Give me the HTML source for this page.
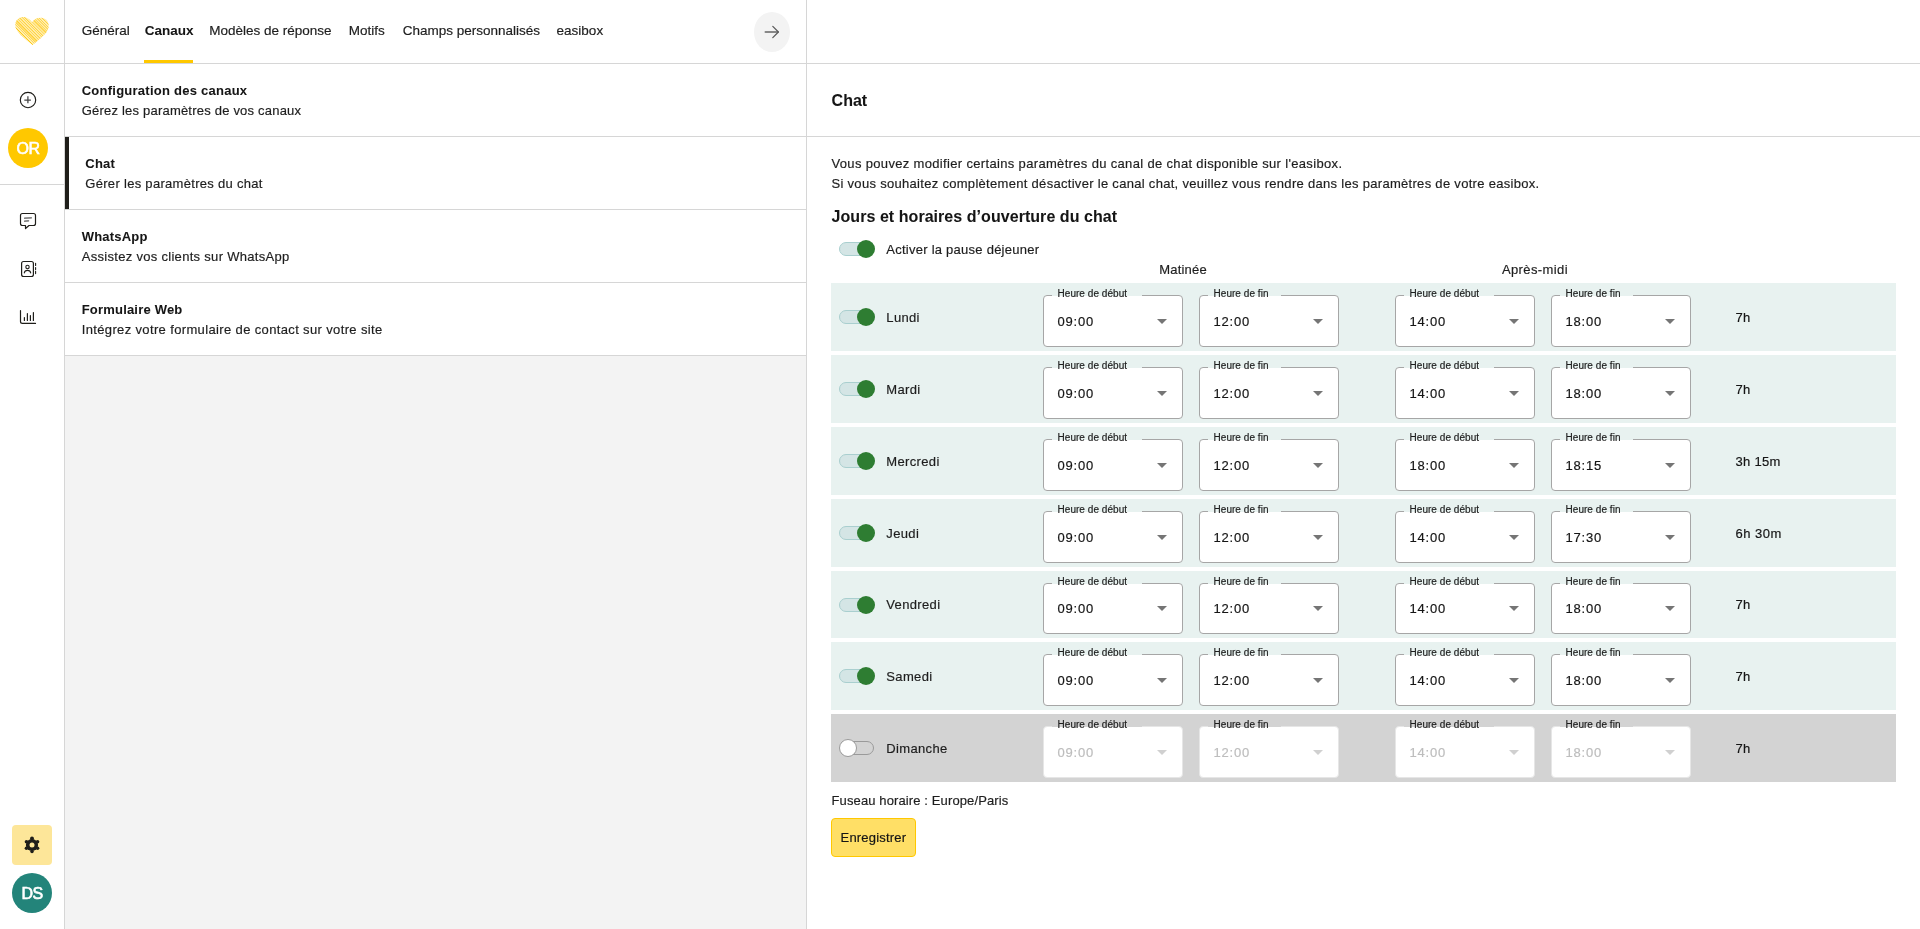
<!DOCTYPE html>
<html lang="fr"><head><meta charset="utf-8"><title>Canaux - Chat</title>
<style>
html,body{margin:0;padding:0;width:1920px;height:929px;overflow:hidden;background:#fff;font-family:"Liberation Sans", sans-serif;}
.t{position:absolute;white-space:nowrap;}
body>div.wrap{position:absolute;left:0;top:0;width:1920px;height:929px;will-change:transform;}
.r{position:absolute;}
</style></head><body><div class="wrap">
<div class="r" style="left:65px;top:356px;width:741px;height:573px;background:#f3f3f3"></div>
<div class="r" style="left:0px;top:63px;width:1920px;height:1px;background:#d6d6d6"></div>
<div class="r" style="left:64px;top:0px;width:1px;height:929px;background:#d6d6d6"></div>
<div class="r" style="left:0px;top:184px;width:64px;height:1px;background:#d6d6d6"></div>
<div class="r" style="left:806px;top:0px;width:1px;height:929px;background:#d6d6d6"></div>
<div class="r" style="left:65px;top:136px;width:1855px;height:1px;background:#d6d6d6"></div>
<div class="r" style="left:65px;top:209px;width:741px;height:1px;background:#d6d6d6"></div>
<div class="r" style="left:65px;top:282px;width:741px;height:1px;background:#d6d6d6"></div>
<div class="r" style="left:65px;top:355px;width:741px;height:1px;background:#d6d6d6"></div>
<div class="r" style="left:65px;top:137px;width:4px;height:72px;background:#1f1e1a"></div>
<div class="t" style="left:81.70px;top:23.77px;font-size:13.5px;line-height:13.5px;font-weight:400;color:#1e1e1e;letter-spacing:0px;-webkit-text-stroke:0.18px #1e1e1e;">Général</div>
<div class="t" style="left:144.75px;top:23.77px;font-size:13.5px;line-height:13.5px;font-weight:700;color:#151515;letter-spacing:0px;-webkit-text-stroke:0.05px #151515;">Canaux</div>
<div class="t" style="left:209.20px;top:23.77px;font-size:13.5px;line-height:13.5px;font-weight:400;color:#1e1e1e;letter-spacing:0px;-webkit-text-stroke:0.18px #1e1e1e;">Modèles de réponse</div>
<div class="t" style="left:348.80px;top:23.77px;font-size:13.5px;line-height:13.5px;font-weight:400;color:#1e1e1e;letter-spacing:0px;-webkit-text-stroke:0.18px #1e1e1e;">Motifs</div>
<div class="t" style="left:402.80px;top:23.77px;font-size:13.5px;line-height:13.5px;font-weight:400;color:#1e1e1e;letter-spacing:0px;-webkit-text-stroke:0.18px #1e1e1e;">Champs personnalisés</div>
<div class="t" style="left:556.60px;top:23.77px;font-size:13.5px;line-height:13.5px;font-weight:400;color:#1e1e1e;letter-spacing:0px;-webkit-text-stroke:0.18px #1e1e1e;">easibox</div>
<div class="r" style="left:144px;top:60px;width:49px;height:3px;background:#ffc800"></div>
<div class="r" style="left:754px;top:12px;width:36px;height:40px;background:#f3f3f3;border-radius:50%"></div>
<div class="t" style="left:81.70px;top:84.30px;font-size:13px;line-height:13px;font-weight:700;color:#151515;letter-spacing:0.25px;-webkit-text-stroke:0.05px #151515;">Configuration des canaux</div>
<div class="t" style="left:81.70px;top:103.80px;font-size:13px;line-height:13px;font-weight:400;color:#1e1e1e;letter-spacing:0.21px;-webkit-text-stroke:0.18px #1e1e1e;">Gérez les paramètres de vos canaux</div>
<div class="t" style="left:85.30px;top:157.30px;font-size:13px;line-height:13px;font-weight:700;color:#151515;letter-spacing:0.2px;-webkit-text-stroke:0.05px #151515;">Chat</div>
<div class="t" style="left:85.30px;top:176.80px;font-size:13px;line-height:13px;font-weight:400;color:#1e1e1e;letter-spacing:0.3px;-webkit-text-stroke:0.18px #1e1e1e;">Gérer les paramètres du chat</div>
<div class="t" style="left:81.70px;top:230.30px;font-size:13px;line-height:13px;font-weight:700;color:#151515;letter-spacing:0.2px;-webkit-text-stroke:0.05px #151515;">WhatsApp</div>
<div class="t" style="left:81.70px;top:249.80px;font-size:13px;line-height:13px;font-weight:400;color:#1e1e1e;letter-spacing:0.3px;-webkit-text-stroke:0.18px #1e1e1e;">Assistez vos clients sur WhatsApp</div>
<div class="t" style="left:81.70px;top:303.30px;font-size:13px;line-height:13px;font-weight:700;color:#151515;letter-spacing:0.2px;-webkit-text-stroke:0.05px #151515;">Formulaire Web</div>
<div class="t" style="left:81.70px;top:322.80px;font-size:13px;line-height:13px;font-weight:400;color:#1e1e1e;letter-spacing:0.36px;-webkit-text-stroke:0.18px #1e1e1e;">Intégrez votre formulaire de contact sur votre site</div>
<div class="t" style="left:831.60px;top:93.06px;font-size:16px;line-height:16px;font-weight:700;color:#151515;letter-spacing:0px;-webkit-text-stroke:0.05px #151515;">Chat</div>
<div class="t" style="left:831.50px;top:157.00px;font-size:13px;line-height:13px;font-weight:400;color:#1e1e1e;letter-spacing:0.335px;-webkit-text-stroke:0.18px #1e1e1e;">Vous pouvez modifier certains paramètres du canal de chat disponible sur l'easibox.</div>
<div class="t" style="left:831.50px;top:176.90px;font-size:13px;line-height:13px;font-weight:400;color:#1e1e1e;letter-spacing:0.3px;-webkit-text-stroke:0.18px #1e1e1e;">Si vous souhaitez complètement désactiver le canal chat, veuillez vous rendre dans les paramètres de votre easibox.</div>
<div class="t" style="left:831.60px;top:209.46px;font-size:16px;line-height:16px;font-weight:700;color:#151515;letter-spacing:0.05px;-webkit-text-stroke:0.05px #151515;">Jours et horaires d’ouverture du chat</div>
<div class="r" style="left:839px;top:242px;width:34px;height:14px;box-sizing:border-box;background:#d4e5e5;border:1px solid #a9cfcf;border-radius:7px"></div>
<div class="r" style="left:857px;top:240px;width:18px;height:18px;background:#2e7d32;border-radius:50%"></div>
<div class="t" style="left:886.30px;top:243.20px;font-size:13px;line-height:13px;font-weight:400;color:#1e1e1e;letter-spacing:0.25px;-webkit-text-stroke:0.18px #1e1e1e;">Activer la pause déjeuner</div>
<div class="t" style="left:1159.20px;top:263.00px;font-size:13px;line-height:13px;font-weight:400;color:#1e1e1e;letter-spacing:0.2px;-webkit-text-stroke:0.18px #1e1e1e;">Matinée</div>
<div class="t" style="left:1501.90px;top:263.00px;font-size:13px;line-height:13px;font-weight:400;color:#1e1e1e;letter-spacing:0.4px;-webkit-text-stroke:0.18px #1e1e1e;">Après-midi</div>
<div class="r" style="left:831px;top:283px;width:1065px;height:68px;background:#e8f2f0"></div>
<div class="r" style="left:839px;top:310.0px;width:34px;height:14px;box-sizing:border-box;background:#d4e5e5;border:1px solid #a9cfcf;border-radius:7px"></div>
<div class="r" style="left:857px;top:308.0px;width:18px;height:18px;background:#2e7d32;border-radius:50%"></div>
<div class="t" style="left:886.30px;top:310.80px;font-size:13px;line-height:13px;font-weight:400;color:#1e1e1e;letter-spacing:0.35px;-webkit-text-stroke:0.18px #1e1e1e;">Lundi</div>
<div class="r" style="left:1043px;top:295px;width:140px;height:52px;box-sizing:border-box;background:#fff;border:1px solid #a6a6a6;border-radius:4px"></div>
<div class="r" style="left:1052px;top:294px;width:90px;height:3px;background:#e8f2f0"></div>
<div class="r" style="left:1052px;top:296px;width:90px;height:2px;background:#fff"></div>
<div class="t" style="left:1057.50px;top:288.54px;font-size:10px;line-height:10px;font-weight:400;color:#1e1e1e;letter-spacing:0.05px;-webkit-text-stroke:0.18px #1e1e1e;">Heure de début</div>
<div class="t" style="left:1057.50px;top:314.80px;font-size:13px;line-height:13px;font-weight:400;color:#151515;letter-spacing:0.8px;-webkit-text-stroke:0.18px #151515;">09:00</div>
<div class="r" style="left:1157.2px;top:319px;width:0;height:0;border-left:5px solid transparent;border-right:5px solid transparent;border-top:5px solid #757575"></div>
<div class="r" style="left:1199px;top:295px;width:140px;height:52px;box-sizing:border-box;background:#fff;border:1px solid #a6a6a6;border-radius:4px"></div>
<div class="r" style="left:1208px;top:294px;width:73px;height:3px;background:#e8f2f0"></div>
<div class="r" style="left:1208px;top:296px;width:73px;height:2px;background:#fff"></div>
<div class="t" style="left:1213.50px;top:288.54px;font-size:10px;line-height:10px;font-weight:400;color:#1e1e1e;letter-spacing:0.05px;-webkit-text-stroke:0.18px #1e1e1e;">Heure de fin</div>
<div class="t" style="left:1213.50px;top:314.80px;font-size:13px;line-height:13px;font-weight:400;color:#151515;letter-spacing:0.8px;-webkit-text-stroke:0.18px #151515;">12:00</div>
<div class="r" style="left:1313.2px;top:319px;width:0;height:0;border-left:5px solid transparent;border-right:5px solid transparent;border-top:5px solid #757575"></div>
<div class="r" style="left:1395px;top:295px;width:140px;height:52px;box-sizing:border-box;background:#fff;border:1px solid #a6a6a6;border-radius:4px"></div>
<div class="r" style="left:1404px;top:294px;width:90px;height:3px;background:#e8f2f0"></div>
<div class="r" style="left:1404px;top:296px;width:90px;height:2px;background:#fff"></div>
<div class="t" style="left:1409.50px;top:288.54px;font-size:10px;line-height:10px;font-weight:400;color:#1e1e1e;letter-spacing:0.05px;-webkit-text-stroke:0.18px #1e1e1e;">Heure de début</div>
<div class="t" style="left:1409.50px;top:314.80px;font-size:13px;line-height:13px;font-weight:400;color:#151515;letter-spacing:0.8px;-webkit-text-stroke:0.18px #151515;">14:00</div>
<div class="r" style="left:1509.2px;top:319px;width:0;height:0;border-left:5px solid transparent;border-right:5px solid transparent;border-top:5px solid #757575"></div>
<div class="r" style="left:1551px;top:295px;width:140px;height:52px;box-sizing:border-box;background:#fff;border:1px solid #a6a6a6;border-radius:4px"></div>
<div class="r" style="left:1560px;top:294px;width:73px;height:3px;background:#e8f2f0"></div>
<div class="r" style="left:1560px;top:296px;width:73px;height:2px;background:#fff"></div>
<div class="t" style="left:1565.50px;top:288.54px;font-size:10px;line-height:10px;font-weight:400;color:#1e1e1e;letter-spacing:0.05px;-webkit-text-stroke:0.18px #1e1e1e;">Heure de fin</div>
<div class="t" style="left:1565.50px;top:314.80px;font-size:13px;line-height:13px;font-weight:400;color:#151515;letter-spacing:0.8px;-webkit-text-stroke:0.18px #151515;">18:00</div>
<div class="r" style="left:1665.2px;top:319px;width:0;height:0;border-left:5px solid transparent;border-right:5px solid transparent;border-top:5px solid #757575"></div>
<div class="t" style="left:1735.50px;top:310.60px;font-size:13px;line-height:13px;font-weight:400;color:#151515;letter-spacing:0.15px;-webkit-text-stroke:0.18px #151515;">7h</div>
<div class="r" style="left:831px;top:355px;width:1065px;height:68px;background:#e8f2f0"></div>
<div class="r" style="left:839px;top:382.0px;width:34px;height:14px;box-sizing:border-box;background:#d4e5e5;border:1px solid #a9cfcf;border-radius:7px"></div>
<div class="r" style="left:857px;top:380.0px;width:18px;height:18px;background:#2e7d32;border-radius:50%"></div>
<div class="t" style="left:886.30px;top:382.80px;font-size:13px;line-height:13px;font-weight:400;color:#1e1e1e;letter-spacing:0.35px;-webkit-text-stroke:0.18px #1e1e1e;">Mardi</div>
<div class="r" style="left:1043px;top:367px;width:140px;height:52px;box-sizing:border-box;background:#fff;border:1px solid #a6a6a6;border-radius:4px"></div>
<div class="r" style="left:1052px;top:366px;width:90px;height:3px;background:#e8f2f0"></div>
<div class="r" style="left:1052px;top:368px;width:90px;height:2px;background:#fff"></div>
<div class="t" style="left:1057.50px;top:360.54px;font-size:10px;line-height:10px;font-weight:400;color:#1e1e1e;letter-spacing:0.05px;-webkit-text-stroke:0.18px #1e1e1e;">Heure de début</div>
<div class="t" style="left:1057.50px;top:386.80px;font-size:13px;line-height:13px;font-weight:400;color:#151515;letter-spacing:0.8px;-webkit-text-stroke:0.18px #151515;">09:00</div>
<div class="r" style="left:1157.2px;top:391px;width:0;height:0;border-left:5px solid transparent;border-right:5px solid transparent;border-top:5px solid #757575"></div>
<div class="r" style="left:1199px;top:367px;width:140px;height:52px;box-sizing:border-box;background:#fff;border:1px solid #a6a6a6;border-radius:4px"></div>
<div class="r" style="left:1208px;top:366px;width:73px;height:3px;background:#e8f2f0"></div>
<div class="r" style="left:1208px;top:368px;width:73px;height:2px;background:#fff"></div>
<div class="t" style="left:1213.50px;top:360.54px;font-size:10px;line-height:10px;font-weight:400;color:#1e1e1e;letter-spacing:0.05px;-webkit-text-stroke:0.18px #1e1e1e;">Heure de fin</div>
<div class="t" style="left:1213.50px;top:386.80px;font-size:13px;line-height:13px;font-weight:400;color:#151515;letter-spacing:0.8px;-webkit-text-stroke:0.18px #151515;">12:00</div>
<div class="r" style="left:1313.2px;top:391px;width:0;height:0;border-left:5px solid transparent;border-right:5px solid transparent;border-top:5px solid #757575"></div>
<div class="r" style="left:1395px;top:367px;width:140px;height:52px;box-sizing:border-box;background:#fff;border:1px solid #a6a6a6;border-radius:4px"></div>
<div class="r" style="left:1404px;top:366px;width:90px;height:3px;background:#e8f2f0"></div>
<div class="r" style="left:1404px;top:368px;width:90px;height:2px;background:#fff"></div>
<div class="t" style="left:1409.50px;top:360.54px;font-size:10px;line-height:10px;font-weight:400;color:#1e1e1e;letter-spacing:0.05px;-webkit-text-stroke:0.18px #1e1e1e;">Heure de début</div>
<div class="t" style="left:1409.50px;top:386.80px;font-size:13px;line-height:13px;font-weight:400;color:#151515;letter-spacing:0.8px;-webkit-text-stroke:0.18px #151515;">14:00</div>
<div class="r" style="left:1509.2px;top:391px;width:0;height:0;border-left:5px solid transparent;border-right:5px solid transparent;border-top:5px solid #757575"></div>
<div class="r" style="left:1551px;top:367px;width:140px;height:52px;box-sizing:border-box;background:#fff;border:1px solid #a6a6a6;border-radius:4px"></div>
<div class="r" style="left:1560px;top:366px;width:73px;height:3px;background:#e8f2f0"></div>
<div class="r" style="left:1560px;top:368px;width:73px;height:2px;background:#fff"></div>
<div class="t" style="left:1565.50px;top:360.54px;font-size:10px;line-height:10px;font-weight:400;color:#1e1e1e;letter-spacing:0.05px;-webkit-text-stroke:0.18px #1e1e1e;">Heure de fin</div>
<div class="t" style="left:1565.50px;top:386.80px;font-size:13px;line-height:13px;font-weight:400;color:#151515;letter-spacing:0.8px;-webkit-text-stroke:0.18px #151515;">18:00</div>
<div class="r" style="left:1665.2px;top:391px;width:0;height:0;border-left:5px solid transparent;border-right:5px solid transparent;border-top:5px solid #757575"></div>
<div class="t" style="left:1735.50px;top:382.60px;font-size:13px;line-height:13px;font-weight:400;color:#151515;letter-spacing:0.15px;-webkit-text-stroke:0.18px #151515;">7h</div>
<div class="r" style="left:831px;top:427px;width:1065px;height:68px;background:#e8f2f0"></div>
<div class="r" style="left:839px;top:454.0px;width:34px;height:14px;box-sizing:border-box;background:#d4e5e5;border:1px solid #a9cfcf;border-radius:7px"></div>
<div class="r" style="left:857px;top:452.0px;width:18px;height:18px;background:#2e7d32;border-radius:50%"></div>
<div class="t" style="left:886.30px;top:454.80px;font-size:13px;line-height:13px;font-weight:400;color:#1e1e1e;letter-spacing:0.35px;-webkit-text-stroke:0.18px #1e1e1e;">Mercredi</div>
<div class="r" style="left:1043px;top:439px;width:140px;height:52px;box-sizing:border-box;background:#fff;border:1px solid #a6a6a6;border-radius:4px"></div>
<div class="r" style="left:1052px;top:438px;width:90px;height:3px;background:#e8f2f0"></div>
<div class="r" style="left:1052px;top:440px;width:90px;height:2px;background:#fff"></div>
<div class="t" style="left:1057.50px;top:432.54px;font-size:10px;line-height:10px;font-weight:400;color:#1e1e1e;letter-spacing:0.05px;-webkit-text-stroke:0.18px #1e1e1e;">Heure de début</div>
<div class="t" style="left:1057.50px;top:458.80px;font-size:13px;line-height:13px;font-weight:400;color:#151515;letter-spacing:0.8px;-webkit-text-stroke:0.18px #151515;">09:00</div>
<div class="r" style="left:1157.2px;top:463px;width:0;height:0;border-left:5px solid transparent;border-right:5px solid transparent;border-top:5px solid #757575"></div>
<div class="r" style="left:1199px;top:439px;width:140px;height:52px;box-sizing:border-box;background:#fff;border:1px solid #a6a6a6;border-radius:4px"></div>
<div class="r" style="left:1208px;top:438px;width:73px;height:3px;background:#e8f2f0"></div>
<div class="r" style="left:1208px;top:440px;width:73px;height:2px;background:#fff"></div>
<div class="t" style="left:1213.50px;top:432.54px;font-size:10px;line-height:10px;font-weight:400;color:#1e1e1e;letter-spacing:0.05px;-webkit-text-stroke:0.18px #1e1e1e;">Heure de fin</div>
<div class="t" style="left:1213.50px;top:458.80px;font-size:13px;line-height:13px;font-weight:400;color:#151515;letter-spacing:0.8px;-webkit-text-stroke:0.18px #151515;">12:00</div>
<div class="r" style="left:1313.2px;top:463px;width:0;height:0;border-left:5px solid transparent;border-right:5px solid transparent;border-top:5px solid #757575"></div>
<div class="r" style="left:1395px;top:439px;width:140px;height:52px;box-sizing:border-box;background:#fff;border:1px solid #a6a6a6;border-radius:4px"></div>
<div class="r" style="left:1404px;top:438px;width:90px;height:3px;background:#e8f2f0"></div>
<div class="r" style="left:1404px;top:440px;width:90px;height:2px;background:#fff"></div>
<div class="t" style="left:1409.50px;top:432.54px;font-size:10px;line-height:10px;font-weight:400;color:#1e1e1e;letter-spacing:0.05px;-webkit-text-stroke:0.18px #1e1e1e;">Heure de début</div>
<div class="t" style="left:1409.50px;top:458.80px;font-size:13px;line-height:13px;font-weight:400;color:#151515;letter-spacing:0.8px;-webkit-text-stroke:0.18px #151515;">18:00</div>
<div class="r" style="left:1509.2px;top:463px;width:0;height:0;border-left:5px solid transparent;border-right:5px solid transparent;border-top:5px solid #757575"></div>
<div class="r" style="left:1551px;top:439px;width:140px;height:52px;box-sizing:border-box;background:#fff;border:1px solid #a6a6a6;border-radius:4px"></div>
<div class="r" style="left:1560px;top:438px;width:73px;height:3px;background:#e8f2f0"></div>
<div class="r" style="left:1560px;top:440px;width:73px;height:2px;background:#fff"></div>
<div class="t" style="left:1565.50px;top:432.54px;font-size:10px;line-height:10px;font-weight:400;color:#1e1e1e;letter-spacing:0.05px;-webkit-text-stroke:0.18px #1e1e1e;">Heure de fin</div>
<div class="t" style="left:1565.50px;top:458.80px;font-size:13px;line-height:13px;font-weight:400;color:#151515;letter-spacing:0.8px;-webkit-text-stroke:0.18px #151515;">18:15</div>
<div class="r" style="left:1665.2px;top:463px;width:0;height:0;border-left:5px solid transparent;border-right:5px solid transparent;border-top:5px solid #757575"></div>
<div class="t" style="left:1735.50px;top:454.60px;font-size:13px;line-height:13px;font-weight:400;color:#151515;letter-spacing:0.28px;-webkit-text-stroke:0.18px #151515;">3h 15m</div>
<div class="r" style="left:831px;top:499px;width:1065px;height:68px;background:#e8f2f0"></div>
<div class="r" style="left:839px;top:526.0px;width:34px;height:14px;box-sizing:border-box;background:#d4e5e5;border:1px solid #a9cfcf;border-radius:7px"></div>
<div class="r" style="left:857px;top:524.0px;width:18px;height:18px;background:#2e7d32;border-radius:50%"></div>
<div class="t" style="left:886.30px;top:526.80px;font-size:13px;line-height:13px;font-weight:400;color:#1e1e1e;letter-spacing:0.35px;-webkit-text-stroke:0.18px #1e1e1e;">Jeudi</div>
<div class="r" style="left:1043px;top:511px;width:140px;height:52px;box-sizing:border-box;background:#fff;border:1px solid #a6a6a6;border-radius:4px"></div>
<div class="r" style="left:1052px;top:510px;width:90px;height:3px;background:#e8f2f0"></div>
<div class="r" style="left:1052px;top:512px;width:90px;height:2px;background:#fff"></div>
<div class="t" style="left:1057.50px;top:504.54px;font-size:10px;line-height:10px;font-weight:400;color:#1e1e1e;letter-spacing:0.05px;-webkit-text-stroke:0.18px #1e1e1e;">Heure de début</div>
<div class="t" style="left:1057.50px;top:530.80px;font-size:13px;line-height:13px;font-weight:400;color:#151515;letter-spacing:0.8px;-webkit-text-stroke:0.18px #151515;">09:00</div>
<div class="r" style="left:1157.2px;top:535px;width:0;height:0;border-left:5px solid transparent;border-right:5px solid transparent;border-top:5px solid #757575"></div>
<div class="r" style="left:1199px;top:511px;width:140px;height:52px;box-sizing:border-box;background:#fff;border:1px solid #a6a6a6;border-radius:4px"></div>
<div class="r" style="left:1208px;top:510px;width:73px;height:3px;background:#e8f2f0"></div>
<div class="r" style="left:1208px;top:512px;width:73px;height:2px;background:#fff"></div>
<div class="t" style="left:1213.50px;top:504.54px;font-size:10px;line-height:10px;font-weight:400;color:#1e1e1e;letter-spacing:0.05px;-webkit-text-stroke:0.18px #1e1e1e;">Heure de fin</div>
<div class="t" style="left:1213.50px;top:530.80px;font-size:13px;line-height:13px;font-weight:400;color:#151515;letter-spacing:0.8px;-webkit-text-stroke:0.18px #151515;">12:00</div>
<div class="r" style="left:1313.2px;top:535px;width:0;height:0;border-left:5px solid transparent;border-right:5px solid transparent;border-top:5px solid #757575"></div>
<div class="r" style="left:1395px;top:511px;width:140px;height:52px;box-sizing:border-box;background:#fff;border:1px solid #a6a6a6;border-radius:4px"></div>
<div class="r" style="left:1404px;top:510px;width:90px;height:3px;background:#e8f2f0"></div>
<div class="r" style="left:1404px;top:512px;width:90px;height:2px;background:#fff"></div>
<div class="t" style="left:1409.50px;top:504.54px;font-size:10px;line-height:10px;font-weight:400;color:#1e1e1e;letter-spacing:0.05px;-webkit-text-stroke:0.18px #1e1e1e;">Heure de début</div>
<div class="t" style="left:1409.50px;top:530.80px;font-size:13px;line-height:13px;font-weight:400;color:#151515;letter-spacing:0.8px;-webkit-text-stroke:0.18px #151515;">14:00</div>
<div class="r" style="left:1509.2px;top:535px;width:0;height:0;border-left:5px solid transparent;border-right:5px solid transparent;border-top:5px solid #757575"></div>
<div class="r" style="left:1551px;top:511px;width:140px;height:52px;box-sizing:border-box;background:#fff;border:1px solid #a6a6a6;border-radius:4px"></div>
<div class="r" style="left:1560px;top:510px;width:73px;height:3px;background:#e8f2f0"></div>
<div class="r" style="left:1560px;top:512px;width:73px;height:2px;background:#fff"></div>
<div class="t" style="left:1565.50px;top:504.54px;font-size:10px;line-height:10px;font-weight:400;color:#1e1e1e;letter-spacing:0.05px;-webkit-text-stroke:0.18px #1e1e1e;">Heure de fin</div>
<div class="t" style="left:1565.50px;top:530.80px;font-size:13px;line-height:13px;font-weight:400;color:#151515;letter-spacing:0.8px;-webkit-text-stroke:0.18px #151515;">17:30</div>
<div class="r" style="left:1665.2px;top:535px;width:0;height:0;border-left:5px solid transparent;border-right:5px solid transparent;border-top:5px solid #757575"></div>
<div class="t" style="left:1735.50px;top:526.60px;font-size:13px;line-height:13px;font-weight:400;color:#151515;letter-spacing:0.5px;-webkit-text-stroke:0.18px #151515;">6h 30m</div>
<div class="r" style="left:831px;top:571px;width:1065px;height:67px;background:#e8f2f0"></div>
<div class="r" style="left:839px;top:597.5px;width:34px;height:14px;box-sizing:border-box;background:#d4e5e5;border:1px solid #a9cfcf;border-radius:7px"></div>
<div class="r" style="left:857px;top:595.5px;width:18px;height:18px;background:#2e7d32;border-radius:50%"></div>
<div class="t" style="left:886.30px;top:598.30px;font-size:13px;line-height:13px;font-weight:400;color:#1e1e1e;letter-spacing:0.35px;-webkit-text-stroke:0.18px #1e1e1e;">Vendredi</div>
<div class="r" style="left:1043px;top:583px;width:140px;height:51px;box-sizing:border-box;background:#fff;border:1px solid #a6a6a6;border-radius:4px"></div>
<div class="r" style="left:1052px;top:582px;width:90px;height:3px;background:#e8f2f0"></div>
<div class="r" style="left:1052px;top:584px;width:90px;height:2px;background:#fff"></div>
<div class="t" style="left:1057.50px;top:576.53px;font-size:10px;line-height:10px;font-weight:400;color:#1e1e1e;letter-spacing:0.05px;-webkit-text-stroke:0.18px #1e1e1e;">Heure de début</div>
<div class="t" style="left:1057.50px;top:601.80px;font-size:13px;line-height:13px;font-weight:400;color:#151515;letter-spacing:0.8px;-webkit-text-stroke:0.18px #151515;">09:00</div>
<div class="r" style="left:1157.2px;top:606px;width:0;height:0;border-left:5px solid transparent;border-right:5px solid transparent;border-top:5px solid #757575"></div>
<div class="r" style="left:1199px;top:583px;width:140px;height:51px;box-sizing:border-box;background:#fff;border:1px solid #a6a6a6;border-radius:4px"></div>
<div class="r" style="left:1208px;top:582px;width:73px;height:3px;background:#e8f2f0"></div>
<div class="r" style="left:1208px;top:584px;width:73px;height:2px;background:#fff"></div>
<div class="t" style="left:1213.50px;top:576.53px;font-size:10px;line-height:10px;font-weight:400;color:#1e1e1e;letter-spacing:0.05px;-webkit-text-stroke:0.18px #1e1e1e;">Heure de fin</div>
<div class="t" style="left:1213.50px;top:601.80px;font-size:13px;line-height:13px;font-weight:400;color:#151515;letter-spacing:0.8px;-webkit-text-stroke:0.18px #151515;">12:00</div>
<div class="r" style="left:1313.2px;top:606px;width:0;height:0;border-left:5px solid transparent;border-right:5px solid transparent;border-top:5px solid #757575"></div>
<div class="r" style="left:1395px;top:583px;width:140px;height:51px;box-sizing:border-box;background:#fff;border:1px solid #a6a6a6;border-radius:4px"></div>
<div class="r" style="left:1404px;top:582px;width:90px;height:3px;background:#e8f2f0"></div>
<div class="r" style="left:1404px;top:584px;width:90px;height:2px;background:#fff"></div>
<div class="t" style="left:1409.50px;top:576.53px;font-size:10px;line-height:10px;font-weight:400;color:#1e1e1e;letter-spacing:0.05px;-webkit-text-stroke:0.18px #1e1e1e;">Heure de début</div>
<div class="t" style="left:1409.50px;top:601.80px;font-size:13px;line-height:13px;font-weight:400;color:#151515;letter-spacing:0.8px;-webkit-text-stroke:0.18px #151515;">14:00</div>
<div class="r" style="left:1509.2px;top:606px;width:0;height:0;border-left:5px solid transparent;border-right:5px solid transparent;border-top:5px solid #757575"></div>
<div class="r" style="left:1551px;top:583px;width:140px;height:51px;box-sizing:border-box;background:#fff;border:1px solid #a6a6a6;border-radius:4px"></div>
<div class="r" style="left:1560px;top:582px;width:73px;height:3px;background:#e8f2f0"></div>
<div class="r" style="left:1560px;top:584px;width:73px;height:2px;background:#fff"></div>
<div class="t" style="left:1565.50px;top:576.53px;font-size:10px;line-height:10px;font-weight:400;color:#1e1e1e;letter-spacing:0.05px;-webkit-text-stroke:0.18px #1e1e1e;">Heure de fin</div>
<div class="t" style="left:1565.50px;top:601.80px;font-size:13px;line-height:13px;font-weight:400;color:#151515;letter-spacing:0.8px;-webkit-text-stroke:0.18px #151515;">18:00</div>
<div class="r" style="left:1665.2px;top:606px;width:0;height:0;border-left:5px solid transparent;border-right:5px solid transparent;border-top:5px solid #757575"></div>
<div class="t" style="left:1735.50px;top:598.10px;font-size:13px;line-height:13px;font-weight:400;color:#151515;letter-spacing:0.15px;-webkit-text-stroke:0.18px #151515;">7h</div>
<div class="r" style="left:831px;top:642px;width:1065px;height:68px;background:#e8f2f0"></div>
<div class="r" style="left:839px;top:669.0px;width:34px;height:14px;box-sizing:border-box;background:#d4e5e5;border:1px solid #a9cfcf;border-radius:7px"></div>
<div class="r" style="left:857px;top:667.0px;width:18px;height:18px;background:#2e7d32;border-radius:50%"></div>
<div class="t" style="left:886.30px;top:669.80px;font-size:13px;line-height:13px;font-weight:400;color:#1e1e1e;letter-spacing:0.35px;-webkit-text-stroke:0.18px #1e1e1e;">Samedi</div>
<div class="r" style="left:1043px;top:654px;width:140px;height:52px;box-sizing:border-box;background:#fff;border:1px solid #a6a6a6;border-radius:4px"></div>
<div class="r" style="left:1052px;top:653px;width:90px;height:3px;background:#e8f2f0"></div>
<div class="r" style="left:1052px;top:655px;width:90px;height:2px;background:#fff"></div>
<div class="t" style="left:1057.50px;top:647.53px;font-size:10px;line-height:10px;font-weight:400;color:#1e1e1e;letter-spacing:0.05px;-webkit-text-stroke:0.18px #1e1e1e;">Heure de début</div>
<div class="t" style="left:1057.50px;top:673.80px;font-size:13px;line-height:13px;font-weight:400;color:#151515;letter-spacing:0.8px;-webkit-text-stroke:0.18px #151515;">09:00</div>
<div class="r" style="left:1157.2px;top:678px;width:0;height:0;border-left:5px solid transparent;border-right:5px solid transparent;border-top:5px solid #757575"></div>
<div class="r" style="left:1199px;top:654px;width:140px;height:52px;box-sizing:border-box;background:#fff;border:1px solid #a6a6a6;border-radius:4px"></div>
<div class="r" style="left:1208px;top:653px;width:73px;height:3px;background:#e8f2f0"></div>
<div class="r" style="left:1208px;top:655px;width:73px;height:2px;background:#fff"></div>
<div class="t" style="left:1213.50px;top:647.53px;font-size:10px;line-height:10px;font-weight:400;color:#1e1e1e;letter-spacing:0.05px;-webkit-text-stroke:0.18px #1e1e1e;">Heure de fin</div>
<div class="t" style="left:1213.50px;top:673.80px;font-size:13px;line-height:13px;font-weight:400;color:#151515;letter-spacing:0.8px;-webkit-text-stroke:0.18px #151515;">12:00</div>
<div class="r" style="left:1313.2px;top:678px;width:0;height:0;border-left:5px solid transparent;border-right:5px solid transparent;border-top:5px solid #757575"></div>
<div class="r" style="left:1395px;top:654px;width:140px;height:52px;box-sizing:border-box;background:#fff;border:1px solid #a6a6a6;border-radius:4px"></div>
<div class="r" style="left:1404px;top:653px;width:90px;height:3px;background:#e8f2f0"></div>
<div class="r" style="left:1404px;top:655px;width:90px;height:2px;background:#fff"></div>
<div class="t" style="left:1409.50px;top:647.53px;font-size:10px;line-height:10px;font-weight:400;color:#1e1e1e;letter-spacing:0.05px;-webkit-text-stroke:0.18px #1e1e1e;">Heure de début</div>
<div class="t" style="left:1409.50px;top:673.80px;font-size:13px;line-height:13px;font-weight:400;color:#151515;letter-spacing:0.8px;-webkit-text-stroke:0.18px #151515;">14:00</div>
<div class="r" style="left:1509.2px;top:678px;width:0;height:0;border-left:5px solid transparent;border-right:5px solid transparent;border-top:5px solid #757575"></div>
<div class="r" style="left:1551px;top:654px;width:140px;height:52px;box-sizing:border-box;background:#fff;border:1px solid #a6a6a6;border-radius:4px"></div>
<div class="r" style="left:1560px;top:653px;width:73px;height:3px;background:#e8f2f0"></div>
<div class="r" style="left:1560px;top:655px;width:73px;height:2px;background:#fff"></div>
<div class="t" style="left:1565.50px;top:647.53px;font-size:10px;line-height:10px;font-weight:400;color:#1e1e1e;letter-spacing:0.05px;-webkit-text-stroke:0.18px #1e1e1e;">Heure de fin</div>
<div class="t" style="left:1565.50px;top:673.80px;font-size:13px;line-height:13px;font-weight:400;color:#151515;letter-spacing:0.8px;-webkit-text-stroke:0.18px #151515;">18:00</div>
<div class="r" style="left:1665.2px;top:678px;width:0;height:0;border-left:5px solid transparent;border-right:5px solid transparent;border-top:5px solid #757575"></div>
<div class="t" style="left:1735.50px;top:669.60px;font-size:13px;line-height:13px;font-weight:400;color:#151515;letter-spacing:0.15px;-webkit-text-stroke:0.18px #151515;">7h</div>
<div class="r" style="left:831px;top:714px;width:1065px;height:68px;background:#d3d3d3"></div>
<div class="r" style="left:840px;top:741.0px;width:34px;height:14px;box-sizing:border-box;background:transparent;border:1px solid #9a9a9a;border-radius:7px"></div>
<div class="r" style="left:839px;top:739.0px;width:18px;height:18px;box-sizing:border-box;background:#fff;border:1px solid #9a9a9a;border-radius:50%"></div>
<div class="t" style="left:886.30px;top:741.80px;font-size:13px;line-height:13px;font-weight:400;color:#1e1e1e;letter-spacing:0.35px;-webkit-text-stroke:0.18px #1e1e1e;">Dimanche</div>
<div class="r" style="left:1043px;top:726px;width:140px;height:52px;box-sizing:border-box;background:#fff;border:1px solid #e6e6e6;border-radius:4px"></div>
<div class="r" style="left:1052px;top:725px;width:90px;height:3px;background:#d3d3d3"></div>
<div class="r" style="left:1052px;top:727px;width:90px;height:2px;background:#fff"></div>
<div class="t" style="left:1057.50px;top:719.53px;font-size:10px;line-height:10px;font-weight:400;color:#1e1e1e;letter-spacing:0.05px;-webkit-text-stroke:0.18px #1e1e1e;">Heure de début</div>
<div class="t" style="left:1057.50px;top:745.80px;font-size:13px;line-height:13px;font-weight:400;color:#bdbdbd;letter-spacing:0.8px;-webkit-text-stroke:0.18px #bdbdbd;">09:00</div>
<div class="r" style="left:1157.2px;top:750px;width:0;height:0;border-left:5px solid transparent;border-right:5px solid transparent;border-top:5px solid #d0d0d0"></div>
<div class="r" style="left:1199px;top:726px;width:140px;height:52px;box-sizing:border-box;background:#fff;border:1px solid #e6e6e6;border-radius:4px"></div>
<div class="r" style="left:1208px;top:725px;width:73px;height:3px;background:#d3d3d3"></div>
<div class="r" style="left:1208px;top:727px;width:73px;height:2px;background:#fff"></div>
<div class="t" style="left:1213.50px;top:719.53px;font-size:10px;line-height:10px;font-weight:400;color:#1e1e1e;letter-spacing:0.05px;-webkit-text-stroke:0.18px #1e1e1e;">Heure de fin</div>
<div class="t" style="left:1213.50px;top:745.80px;font-size:13px;line-height:13px;font-weight:400;color:#bdbdbd;letter-spacing:0.8px;-webkit-text-stroke:0.18px #bdbdbd;">12:00</div>
<div class="r" style="left:1313.2px;top:750px;width:0;height:0;border-left:5px solid transparent;border-right:5px solid transparent;border-top:5px solid #d0d0d0"></div>
<div class="r" style="left:1395px;top:726px;width:140px;height:52px;box-sizing:border-box;background:#fff;border:1px solid #e6e6e6;border-radius:4px"></div>
<div class="r" style="left:1404px;top:725px;width:90px;height:3px;background:#d3d3d3"></div>
<div class="r" style="left:1404px;top:727px;width:90px;height:2px;background:#fff"></div>
<div class="t" style="left:1409.50px;top:719.53px;font-size:10px;line-height:10px;font-weight:400;color:#1e1e1e;letter-spacing:0.05px;-webkit-text-stroke:0.18px #1e1e1e;">Heure de début</div>
<div class="t" style="left:1409.50px;top:745.80px;font-size:13px;line-height:13px;font-weight:400;color:#bdbdbd;letter-spacing:0.8px;-webkit-text-stroke:0.18px #bdbdbd;">14:00</div>
<div class="r" style="left:1509.2px;top:750px;width:0;height:0;border-left:5px solid transparent;border-right:5px solid transparent;border-top:5px solid #d0d0d0"></div>
<div class="r" style="left:1551px;top:726px;width:140px;height:52px;box-sizing:border-box;background:#fff;border:1px solid #e6e6e6;border-radius:4px"></div>
<div class="r" style="left:1560px;top:725px;width:73px;height:3px;background:#d3d3d3"></div>
<div class="r" style="left:1560px;top:727px;width:73px;height:2px;background:#fff"></div>
<div class="t" style="left:1565.50px;top:719.53px;font-size:10px;line-height:10px;font-weight:400;color:#1e1e1e;letter-spacing:0.05px;-webkit-text-stroke:0.18px #1e1e1e;">Heure de fin</div>
<div class="t" style="left:1565.50px;top:745.80px;font-size:13px;line-height:13px;font-weight:400;color:#bdbdbd;letter-spacing:0.8px;-webkit-text-stroke:0.18px #bdbdbd;">18:00</div>
<div class="r" style="left:1665.2px;top:750px;width:0;height:0;border-left:5px solid transparent;border-right:5px solid transparent;border-top:5px solid #d0d0d0"></div>
<div class="t" style="left:1735.50px;top:741.60px;font-size:13px;line-height:13px;font-weight:400;color:#151515;letter-spacing:0.15px;-webkit-text-stroke:0.18px #151515;">7h</div>
<div class="t" style="left:831.50px;top:793.80px;font-size:13px;line-height:13px;font-weight:400;color:#1e1e1e;letter-spacing:0.12px;-webkit-text-stroke:0.18px #1e1e1e;">Fuseau horaire : Europe/Paris</div>
<div class="r" style="left:831px;top:818px;width:85px;height:39px;box-sizing:border-box;background:#ffdf66;border:1px solid #ffc800;border-radius:4px"></div>
<div class="t" style="left:840.60px;top:831.00px;font-size:13px;line-height:13px;font-weight:400;color:#151515;letter-spacing:0.18px;-webkit-text-stroke:0.18px #151515;">Enregistrer</div>
<div class="r" style="left:8px;top:128px;width:40px;height:40px;background:#ffc800;border-radius:50%"></div>
<div class="t" style="left:8px;top:129.2px;width:40px;height:40px;line-height:40px;text-align:center;font-size:16px;color:#fff;-webkit-text-stroke:0.6px #fff;letter-spacing:-0.6px">OR</div>
<div class="r" style="left:12px;top:825px;width:40px;height:40px;background:#fde699;border-radius:4px"></div>
<div class="r" style="left:12px;top:873px;width:40px;height:40px;background:#23847a;border-radius:50%"></div>
<div class="t" style="left:12px;top:874.2px;width:40px;height:40px;line-height:40px;text-align:center;font-size:16px;color:#fff;-webkit-text-stroke:0.6px #fff;letter-spacing:-0.6px">DS</div>

<svg class="r" style="left:0;top:0" width="1920" height="929" viewBox="0 0 1920 929">
 <defs>
  <clipPath id="hc"><path d="M32.5 45 C28 41 21 36.5 17.5 31 C15.5 28 14.8 25.5 15.5 23 C16.5 19.5 19.5 17 23 17 C26.5 17 29.5 19 32 22.2 C34.5 19 37.5 17.6 41 17.8 C45.5 18 48.5 21 48.7 25.5 C48.8 28.5 47.5 31.5 45 34 C41 38.5 36 42 32.5 45 Z"/></clipPath>
 </defs>
 <g clip-path="url(#hc)">
  <rect x="10" y="10" width="45" height="40" fill="#ffeeb0"/>
  <path d="M0 -30.0 L60 30.0" stroke="#ffc400" stroke-width="1.2" opacity="0.75"/>
  <path d="M0 -27.2 L60 32.8" stroke="#ffc400" stroke-width="0.8" opacity="0.6"/>
  <path d="M0 -24.1 L60 35.9" stroke="#ffc400" stroke-width="0.8" opacity="0.9"/>
  <path d="M0 -21.0 L60 39.0" stroke="#ffc400" stroke-width="0.8" opacity="0.75"/>
  <path d="M0 -18.6 L60 41.4" stroke="#ffc400" stroke-width="0.8" opacity="1.0"/>
  <path d="M0 -15.8 L60 44.2" stroke="#ffc400" stroke-width="0.8" opacity="0.75"/>
  <path d="M0 -13.4 L60 46.6" stroke="#ffc400" stroke-width="1.5" opacity="0.6"/>
  <path d="M0 -10.3 L60 49.7" stroke="#ffc400" stroke-width="0.8" opacity="0.75"/>
  <path d="M0 -7.2 L60 52.8" stroke="#ffc400" stroke-width="0.8" opacity="1.0"/>
  <path d="M0 -4.8 L60 55.2" stroke="#ffc400" stroke-width="1.0" opacity="0.6"/>
  <path d="M0 -1.7 L60 58.3" stroke="#ffc400" stroke-width="1.0" opacity="0.9"/>
  <path d="M0 1.1 L60 61.1" stroke="#ffc400" stroke-width="1.0" opacity="0.6"/>
  <path d="M0 4.2 L60 64.2" stroke="#ffc400" stroke-width="1.2" opacity="0.75"/>
  <path d="M0 6.6 L60 66.6" stroke="#ffc400" stroke-width="1.0" opacity="0.9"/>
  <path d="M0 9.0 L60 69.0" stroke="#ffc400" stroke-width="0.8" opacity="0.6"/>
  <path d="M0 12.1 L60 72.1" stroke="#ffc400" stroke-width="1.0" opacity="1.0"/>
  <path d="M0 15.2 L60 75.2" stroke="#ffc400" stroke-width="1.5" opacity="0.9"/>
  <path d="M0 18.0 L60 78.0" stroke="#ffc400" stroke-width="1.5" opacity="0.9"/>
  <path d="M0 20.8 L60 80.8" stroke="#ffc400" stroke-width="1.0" opacity="0.75"/>
  <path d="M0 23.9 L60 83.9" stroke="#ffc400" stroke-width="1.0" opacity="0.6"/>
  <path d="M0 27.0 L60 87.0" stroke="#ffc400" stroke-width="1.2" opacity="1.0"/>
  <path d="M0 29.8 L60 89.8" stroke="#ffc400" stroke-width="1.5" opacity="0.9"/>
  <path d="M0 32.9 L60 92.9" stroke="#ffc400" stroke-width="0.8" opacity="0.6"/>
  <path d="M0 36.0 L60 96.0" stroke="#ffc400" stroke-width="1.5" opacity="0.75"/>
  <path d="M0 38.8 L60 98.8" stroke="#ffc400" stroke-width="1.0" opacity="1.0"/>
  <path d="M0 41.6 L60 101.6" stroke="#ffc400" stroke-width="0.8" opacity="0.6"/>
  <path d="M0 44.7 L60 104.7" stroke="#ffc400" stroke-width="1.2" opacity="0.9"/>
  <path d="M0 47.8 L60 107.8" stroke="#ffc400" stroke-width="1.2" opacity="1.0"/>
 </g>
 <!-- plus -->
 <circle cx="28" cy="100" r="7.7" fill="none" stroke="#1f1e1a" stroke-width="1.15"/>
 <path d="M27.9 96.3 V103.3 M24.3 100 H30.9" stroke="#444" stroke-width="1.25"/>
 <!-- chat bubble -->
 <path d="M22.5 213.5 H33.5 Q35.5 213.5 35.5 215.5 V223.5 Q35.5 225.5 33.5 225.5 H29 L25.5 228.5 V225.5 H22.5 Q20.5 225.5 20.5 223.5 V215.5 Q20.5 213.5 22.5 213.5 Z" fill="none" stroke="#1f1e1a" stroke-width="1.2" stroke-linejoin="round"/>
 <path d="M24.6 218.1 L31.4 217.8 M24.6 221.1 L28.6 220.9" stroke="#555" stroke-width="1.3" stroke-linecap="round"/>
 <!-- contacts -->
 <rect x="21.6" y="261.5" width="11.8" height="15" rx="2" fill="none" stroke="#1f1e1a" stroke-width="1.2"/>
 <circle cx="27.5" cy="267" r="1.7" fill="none" stroke="#1f1e1a" stroke-width="1.1"/>
 <path d="M24.3 272.9 C24.6 271 25.8 270.4 27.5 270.4 C29.2 270.4 30.4 271 30.7 272.9" fill="none" stroke="#1f1e1a" stroke-width="1.1" stroke-linecap="round"/>
 <path d="M35.6 263.3 V265.5 M35.6 267.5 V269.6 M35.6 271.4 V273.6" stroke="#1f1e1a" stroke-width="1.1" stroke-linecap="round"/>
 <!-- stats -->
 <path d="M20.5 310.5 V321.5 Q20.5 323.4 22.4 323.4 H35.5" fill="none" stroke="#1f1e1a" stroke-width="1.2" stroke-linecap="round"/>
 <path d="M24.4 317.6 V320.4 M27.4 313.6 V320.4 M30.4 315.6 V320.4 M33.4 312.6 V320.4" stroke="#1f1e1a" stroke-width="1.2" stroke-linecap="round"/>
 <!-- gear -->
 <circle cx="32" cy="845" r="6.1" fill="#1f1e1a"/><circle cx="32.00" cy="838.55" r="1.95" fill="#1f1e1a"/><circle cx="37.59" cy="841.77" r="1.75" fill="#1f1e1a"/><circle cx="37.59" cy="848.23" r="1.75" fill="#1f1e1a"/><circle cx="32.00" cy="851.45" r="1.75" fill="#1f1e1a"/><circle cx="26.41" cy="848.23" r="1.75" fill="#1f1e1a"/><circle cx="26.41" cy="841.77" r="1.75" fill="#1f1e1a"/>
 <circle cx="32" cy="845" r="2.5" fill="#fde699"/>
 <!-- arrow -->
 <path d="M765.3 32 H778" fill="none" stroke="#666" stroke-width="1.6" stroke-linecap="round"/><path d="M772.8 26.4 L778.4 32 L772.8 37.6" fill="none" stroke="#5a5a5a" stroke-width="1.25" stroke-linecap="round" stroke-linejoin="round"/>
</svg>
</div></body></html>
